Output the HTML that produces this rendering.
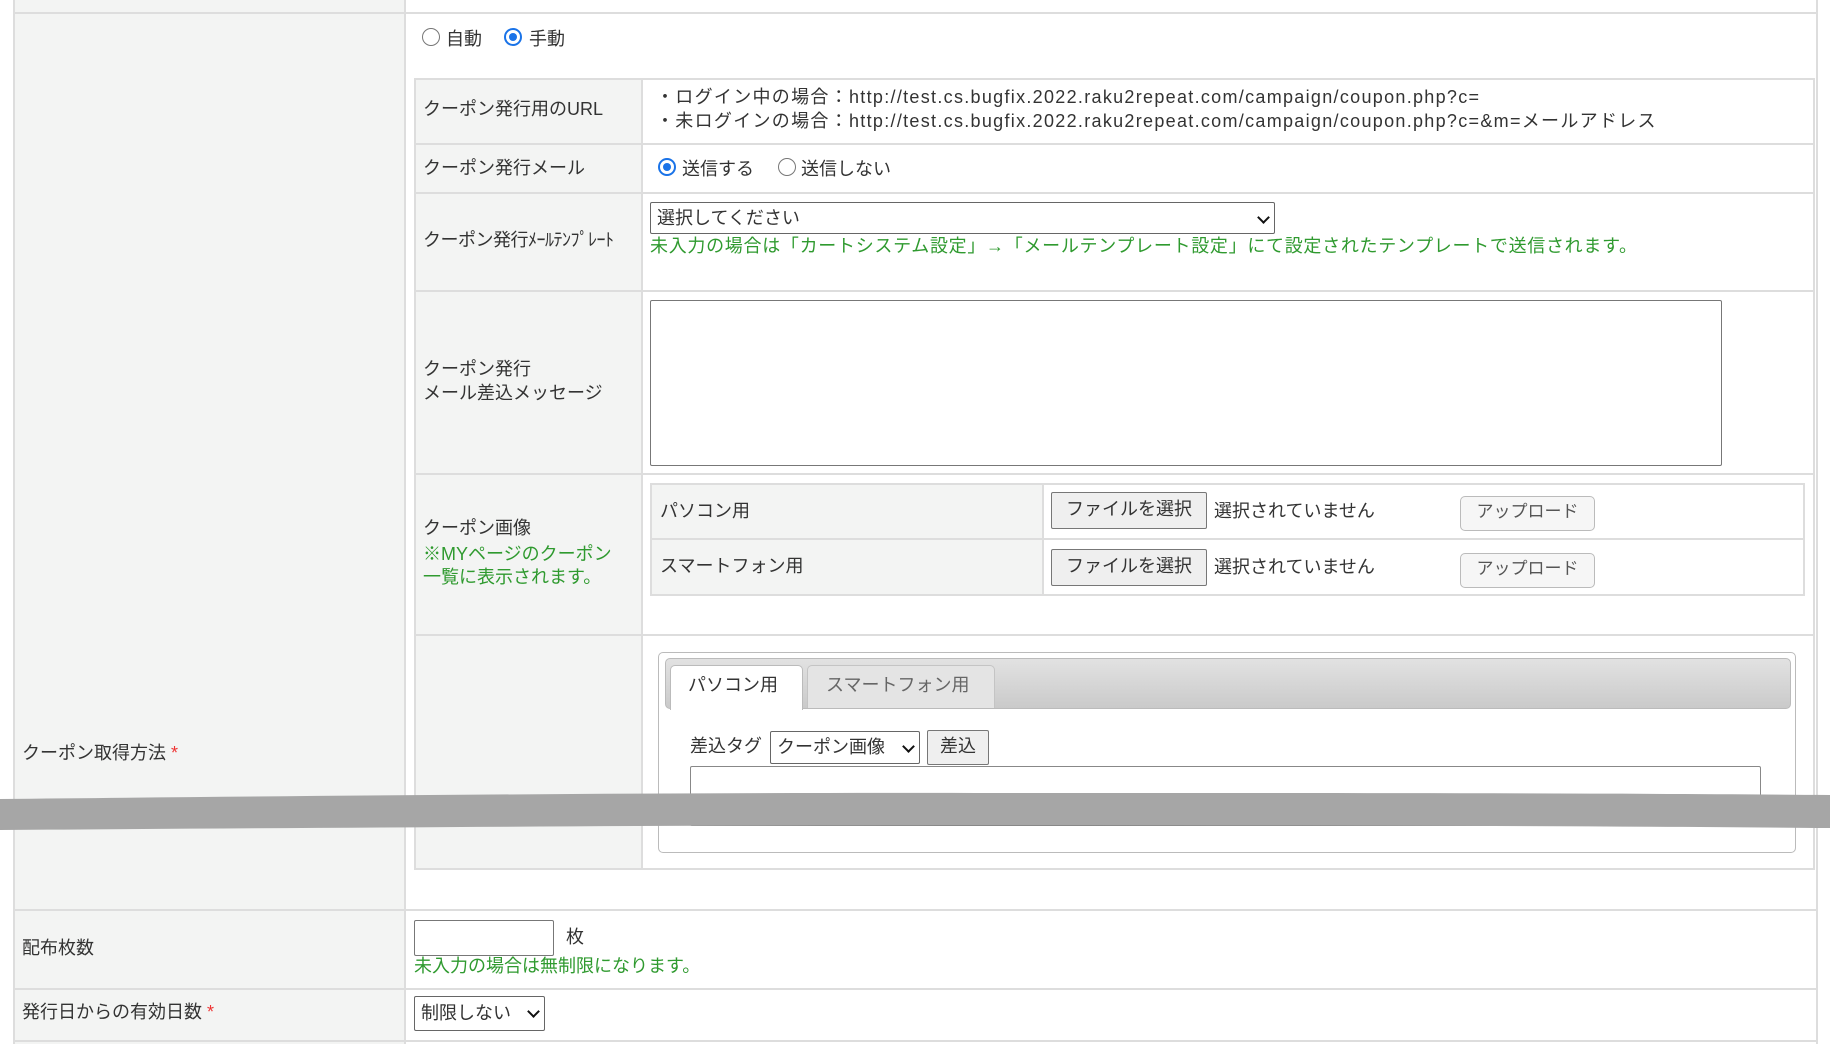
<!DOCTYPE html>
<html><head><meta charset="utf-8"><style>
*{box-sizing:border-box;margin:0;padding:0}
body{width:1830px;height:1044px;background:#fff;position:relative;overflow:hidden;font-family:"Liberation Sans","Noto Sans CJK JP",sans-serif;font-size:18px;color:#333}
.a{position:absolute}
.lbl{background:#f3f4f3}
.t{position:absolute;white-space:nowrap;line-height:22px}
.g{color:#2f9a2f}
.radio{position:absolute;width:18px;height:18px;border:1.5px solid #777;border-radius:50%;background:#fff}
.radio.on{border:2px solid #1a73e8}
.radio.on:after{content:"";position:absolute;left:3px;top:3px;width:8px;height:8px;border-radius:50%;background:#1a73e8}
.btn{position:absolute;border:1.5px solid #777;background:#efefef;border-radius:2px;text-align:center;line-height:32px}
.btn2{position:absolute;border:1.5px solid #bbb;background:#f6f6f6;border-radius:5px;text-align:center;line-height:30px;color:#555;font-size:17px}
.sel{position:absolute;border:1.5px solid #666;border-radius:2px;background:#fff;padding-left:6px;line-height:30px}
.chev{position:absolute;right:6px;top:10px;width:9px;height:9px;border-right:2.5px solid #111;border-bottom:2.5px solid #111;transform:rotate(45deg)}
</style></head><body>
<div class="a lbl" style="left:13px;top:0;width:392px;height:1044px"></div>
<div class="a" style="left:13px;top:0;width:2px;height:1044px;background:#ddd"></div>
<div class="a" style="left:404px;top:0;width:2px;height:1044px;background:#ddd"></div>
<div class="a" style="left:1816px;top:0;width:2px;height:1044px;background:#ddd"></div>
<div class="a" style="left:13px;top:12px;width:1805px;height:2px;background:#ddd"></div>
<div class="a" style="left:13px;top:909px;width:1805px;height:2px;background:#ddd"></div>
<div class="a" style="left:13px;top:988px;width:1805px;height:2px;background:#ddd"></div>
<div class="a" style="left:13px;top:1040px;width:1805px;height:2px;background:#ddd"></div>

<div class="radio" style="left:422px;top:28px"></div><div class="t" style="left:446px;top:28px">自動</div>
<div class="radio on" style="left:504px;top:28px"></div><div class="t" style="left:529px;top:28px">手動</div>

<div class="a lbl" style="left:414px;top:78px;width:228px;height:791px"></div>
<div class="a" style="left:414px;top:78px;width:1401px;height:792px;border:2px solid #ddd"></div>
<div class="a" style="left:641px;top:78px;width:2px;height:792px;background:#ddd"></div>
<div class="a" style="left:414px;top:143px;width:1401px;height:2px;background:#ddd"></div>
<div class="a" style="left:414px;top:192px;width:1401px;height:2px;background:#ddd"></div>
<div class="a" style="left:414px;top:290px;width:1401px;height:2px;background:#ddd"></div>
<div class="a" style="left:414px;top:473px;width:1401px;height:2px;background:#ddd"></div>
<div class="a" style="left:414px;top:634px;width:1401px;height:2px;background:#ddd"></div>

<div class="t" style="left:423px;top:98px">クーポン発行用のURL</div>
<div class="t" style="left:656px;top:86px;letter-spacing:1.3px">・ログイン中の場合：http://test.cs.bugfix.2022.raku2repeat.com/campaign/coupon.php?c=</div>
<div class="t" style="left:656px;top:110px;letter-spacing:1.3px">・未ログインの場合：http://test.cs.bugfix.2022.raku2repeat.com/campaign/coupon.php?c=&amp;m=メールアドレス</div>

<div class="t" style="left:423px;top:157px">クーポン発行メール</div>
<div class="radio on" style="left:658px;top:158px"></div><div class="t" style="left:682px;top:158px">送信する</div>
<div class="radio" style="left:778px;top:158px"></div><div class="t" style="left:801px;top:158px">送信しない</div>

<div class="t" style="left:423px;top:229px;letter-spacing:-0.5px">クーポン発行ﾒｰﾙﾃﾝﾌﾟﾚｰﾄ</div>
<div class="sel" style="left:650px;top:202px;width:625px;height:32px">選択してください<div class="chev"></div></div>
<div class="t g" style="left:650px;top:235px;letter-spacing:0.7px">未入力の場合は「カートシステム設定」→「メールテンプレート設定」にて設定されたテンプレートで送信されます。</div>

<div class="t" style="left:423px;top:358px">クーポン発行</div>
<div class="t" style="left:423px;top:382px">メール差込メッセージ</div>
<div class="a" style="left:650px;top:300px;width:1072px;height:166px;border:1.5px solid #777;border-radius:2px;background:#fff"></div>

<div class="t" style="left:423px;top:517px">クーポン画像</div>
<div class="t g" style="left:423px;top:543px">※MYページのクーポン</div>
<div class="t g" style="left:423px;top:566px">一覧に表示されます。</div>
<div class="a lbl" style="left:650px;top:483px;width:393px;height:112px"></div>
<div class="a" style="left:650px;top:483px;width:1155px;height:113px;border:2px solid #ddd"></div>
<div class="a" style="left:1042px;top:483px;width:2px;height:113px;background:#ddd"></div>
<div class="a" style="left:650px;top:538px;width:1155px;height:2px;background:#ddd"></div>
<div class="t" style="left:660px;top:500px">パソコン用</div>
<div class="t" style="left:660px;top:555px">スマートフォン用</div>
<div class="btn" style="left:1051px;top:492px;width:156px;height:37px">ファイルを選択</div>
<div class="t" style="left:1214px;top:500px">選択されていません</div>
<div class="btn2" style="left:1460px;top:496px;width:135px;height:35px">アップロード</div>
<div class="btn" style="left:1051px;top:549px;width:156px;height:37px">ファイルを選択</div>
<div class="t" style="left:1214px;top:556px">選択されていません</div>
<div class="btn2" style="left:1460px;top:553px;width:135px;height:35px">アップロード</div>

<div class="a" style="left:658px;top:652px;width:1138px;height:201px;border:1.5px solid #bbb;border-radius:5px;background:#fff"></div>
<div class="a" style="left:665px;top:658px;width:1126px;height:51px;border:1.5px solid #bbb;border-radius:5px;background:linear-gradient(#e2e2e2,#cacaca)"></div>
<div class="a" style="left:670px;top:665px;width:133px;height:45px;border:1.5px solid #bbb;border-bottom:none;border-radius:5px 5px 0 0;background:#fff"></div>
<div class="t" style="left:688px;top:674px;color:#333">パソコン用</div>
<div class="a" style="left:807px;top:665px;width:188px;height:43px;border:1.5px solid #c4c4c4;border-bottom:none;border-radius:5px 5px 0 0;background:#e4e4e4"></div>
<div class="t" style="left:826px;top:674px;color:#666">スマートフォン用</div>
<div class="t" style="left:690px;top:735px">差込タグ</div>
<div class="sel" style="left:770px;top:731px;width:150px;height:33px">クーポン画像<div class="chev"></div></div>
<div class="btn" style="left:927px;top:730px;width:62px;height:35px;line-height:31px">差込</div>
<div class="a" style="left:690px;top:766px;width:1071px;height:60px;border:1.5px solid #888;border-radius:2px;background:#fff"></div>

<svg class="a" style="left:0;top:780px" width="1830" height="60"><path d="M0 19 C300 16 700 12 1000 13 C1300 13 1600 13 1830 15 L1830 48 C1600 46 1300 45 1000 45 C700 45 300 48 0 50 Z" fill="#a6a6a6"/></svg>

<div class="t" style="left:22px;top:742px">クーポン取得方法 <span style="color:#e33">*</span></div>

<div class="t" style="left:22px;top:937px">配布枚数</div>
<div class="a" style="left:414px;top:920px;width:140px;height:36px;border:1.5px solid #777;border-radius:2px;background:#fff"></div>
<div class="t" style="left:566px;top:926px">枚</div>
<div class="t g" style="left:414px;top:955px">未入力の場合は無制限になります。</div>

<div class="t" style="left:22px;top:1001px">発行日からの有効日数 <span style="color:#e33">*</span></div>
<div class="sel" style="left:414px;top:996px;width:131px;height:35px;line-height:32px">制限しない<div class="chev"></div></div>
</body></html>
